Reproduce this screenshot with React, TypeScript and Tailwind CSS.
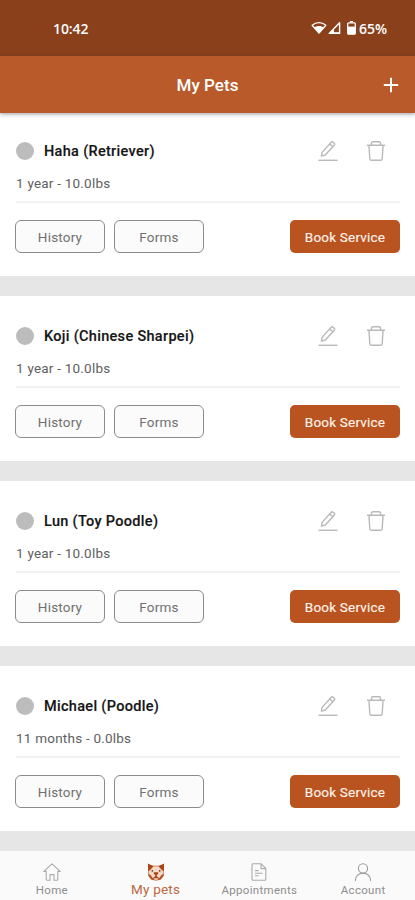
import React from "react";

type Pet = { name: string; info: string };

const pets: Pet[] = [
  { name: "Haha (Retriever)", info: "1 year - 10.0lbs" },
  { name: "Koji (Chinese Sharpei)", info: "1 year - 10.0lbs" },
  { name: "Lun (Toy Poodle)", info: "1 year - 10.0lbs" },
  { name: "Michael (Poodle)", info: "11 months - 0.0lbs" },
];

function StatusBar() {
  return (
    <div className="flex h-14 shrink-0 items-center bg-[#8a401b] pl-[53px] pr-[28px] text-white">
      <span className="font-['Open_Sans',sans-serif] text-[14px] font-semibold tracking-[-0.1px]">10:42</span>
      <div className="ml-auto flex items-center">
        <svg width="16" height="14" viewBox="0 0 16 14" fill="none">
          <path d="M1.2 4.2C5 .8 11 .8 14.8 4.2L8 12z" stroke="#fff" strokeWidth="1.4" strokeLinejoin="round" />
          <path d="M3.4 6.6c2.6-2 6.6-2 9.2 0L8 12.2z" fill="#fff" />
        </svg>
        <svg className="ml-px" width="13" height="14" viewBox="0 0 13 14" fill="none">
          <path d="M11.6 1.8v10.6H1.2z" stroke="#fff" strokeWidth="1.4" strokeLinejoin="round" />
          <path d="M1 12.8 6 7.6v3.6h6v1.6z" fill="#fff" />
        </svg>
        <svg className="ml-[6px]" width="9" height="14" viewBox="0 0 9 14" fill="none">
          <path d="M3 0h3v1.6H3z" fill="#fff" />
          <rect x=".7" y="1.8" width="7.6" height="11.4" rx="1" stroke="#fff" strokeWidth="1.3" />
          <path d="M1 5.6h7v7.6H1z" fill="#fff" />
        </svg>
        <span className="ml-[3px] font-['Open_Sans',sans-serif] text-[14px] font-semibold">65%</span>
      </div>
    </div>
  );
}

function Header() {
  return (
    <header className="z-10 grid h-[57px] shrink-0 grid-cols-[1fr_auto_1fr] items-center bg-[#b85a29] text-white shadow-[0_1px_4px_rgba(30,30,60,0.45)]">
      <span />
      <h1 className="text-[17px] font-medium leading-5 tracking-[0.05px]">My Pets</h1>
      <button className="mr-4 justify-self-end" aria-label="Add pet">
        <svg width="16" height="16" viewBox="0 0 16 16" stroke="#fff" strokeWidth="2">
          <path d="M8 .8v14.4M.8 8h14.4" />
        </svg>
      </button>
    </header>
  );
}

function EditIcon() {
  return (
    <svg width="20" height="22" viewBox="0 0 20 22" fill="none" stroke="#b9b9b9" strokeWidth="1.4" strokeLinejoin="round">
      <path d="M3.4 16.1 4.1 12.4 13.2 2.2Q14 1.4 14.9 2.1L16.3 3.3Q17.1 4.1 16.4 5L7.3 15zM11.7 4l3.1 2.8" />
      <path d="M.5 20.3h19" />
    </svg>
  );
}

function TrashIcon() {
  return (
    <svg width="20" height="22" viewBox="0 0 20 22" fill="none" stroke="#b9b9b9" strokeWidth="1.4" strokeLinejoin="round">
      <path d="M1 5.3h18M5.5 5V3.2Q5.5 1.8 6.9 1.8h6.2q1.4 0 1.4 1.4V5" />
      <path d="m3 5.5.8 13.2q.1 1.6 1.7 1.6h9q1.6 0 1.7-1.6L17 5.5" />
    </svg>
  );
}

function PetCard({ pet, first }: { pet: Pet; first: boolean }) {
  return (
    <article className={`flex shrink-0 flex-col bg-white pl-4 pr-[15px] ${first ? "h-[163px] pt-[27px]" : "h-[165px] pt-[29px]"}`}>
      <div className="flex h-[22px] items-center">
        <span className="size-[18px] rounded-full bg-[#bcbcbc]" />
        <h2 className="ml-[10px] pt-[2px] text-[14.5px] font-medium leading-[22px] tracking-[0.31px] text-[#161616] [-webkit-text-stroke:0.15px_#161616]">{pet.name}</h2>
        <div className="ml-auto mr-[14px] flex gap-7">
          <button aria-label="Edit"><EditIcon /></button>
          <button aria-label="Delete"><TrashIcon /></button>
        </div>
      </div>
      <p className="mt-[10px] h-[31px] border-b-2 border-[#f2f2f2] text-[13.5px] leading-[22px] tracking-[0.22px] text-[#606060]">{pet.info}</p>
      <div className="-ml-px mt-[17px] flex h-[33px] text-[13.5px] tracking-[0.2px]">
        <button className="w-[90px] rounded-[6px] border border-[#8b8b8b] bg-[#fbfbfb] pt-px text-[#707070]">History</button>
        <button className="ml-[9px] w-[90px] rounded-[6px] border border-[#8b8b8b] bg-[#fbfbfb] pt-px text-[#707070]">Forms</button>
        <button className="ml-auto w-[110px] rounded-[5px] bg-[#b9531f] pt-px text-[#fff4ec] [-webkit-text-stroke:0.15px_#fff4ec]">Book Service</button>
      </div>
    </article>
  );
}

function HomeIcon() {
  return (
    <svg width="18" height="18" viewBox="0 0 18 18" fill="none" stroke="#aaa" strokeWidth="1.1" strokeLinejoin="round">
      <path d="M3.2 8.4H.8L9 .8l8.2 7.6h-2.4v8.2q0 .6-.6.6H11v-5.6H7v5.6H3.8q-.6 0-.6-.6z" />
    </svg>
  );
}

function DogIcon() {
  return (
    <svg width="18" height="18" viewBox="0 0 18 18" fill="none">
      <path d="M1.6 3h14.8v9.5l-2.8 3.8q-4.6 2-9.2 0l-2.8-3.8z" fill="#f3d9ca" stroke="#c9784f" strokeWidth=".8" />
      <path d="M.9.6 6.6 3.2 3.6 6.6 1.2 8.4zM17.1.6l-5.7 2.6 3 3.4 2.4 1.8z" fill="#a94318" />
      <path d="M1.3 10.8 4 12.4l1.4 2.4 1.8.6v1.7q-2.2-.1-3.4-1.1l-2.5-3.4zM16.7 10.8 14 12.4l-1.4 2.4-1.8.6v1.7q2.2-.1 3.4-1.1l2.5-3.4z" fill="#b4501f" />
      <path d="M6.8 9.2h4.4v1.5l-1.4 1.3v1.5l2 .9-.8.9H7l-.8-.9 2-.9V12l-1.4-1.3z" fill="#a94318" />
      <circle cx="5.3" cy="7.8" r=".9" fill="#80310f" />
      <circle cx="12.7" cy="7.8" r=".9" fill="#80310f" />
    </svg>
  );
}

function DocumentIcon() {
  return (
    <svg width="18" height="18" viewBox="0 0 18 18" fill="none" stroke="#aaa" strokeWidth="1.1" strokeLinejoin="round">
      <path d="M3.6.8h7.6l4.6 4.6v10.8q0 1-1 1H3q-1 0-1-1V1.8q0-1 1-1zM11 .8v4.8h4.8M5 7.6h3.6M5 10.2h7.6M5 12.8h3.6" />
    </svg>
  );
}

function AccountIcon() {
  return (
    <svg width="18" height="18" viewBox="0 0 18 18" fill="none" stroke="#999" strokeWidth="1.1" strokeLinecap="round">
      <circle cx="9" cy="5.4" r="4.6" />
      <path d="M1.4 17.4C1.8 12.8 4.8 10.2 9 10.2s7.2 2.6 7.6 7.2" />
    </svg>
  );
}

function TabBar() {
  const label = "mt-[1px] text-[11.5px] leading-[16px] tracking-[0.3px] text-[#8e8e8e]";
  return (
    <nav className="z-10 grid h-[49px] shrink-0 grid-cols-4 bg-[#fafafa] pt-3">
      <div className="flex flex-col items-center"><HomeIcon /><span className={label}>Home</span></div>
      <div className="flex flex-col items-center">
        <DogIcon />
        <span className="-mt-px text-[13.5px] leading-[18px] tracking-[0.2px] text-[#bb683f]">My pets</span>
      </div>
      <div className="flex flex-col items-center"><DocumentIcon /><span className={label}>Appointments</span></div>
      <div className="flex flex-col items-center"><AccountIcon /><span className={label}>Account</span></div>
    </nav>
  );
}

export default function App() {
  return (
    <div className="flex h-[900px] w-[415px] flex-col overflow-hidden bg-[#e6e6e6] font-[Roboto,sans-serif]">
      <StatusBar />
      <Header />
      <main className="flex min-h-0 flex-1 flex-col gap-5 overflow-hidden">
        {pets.map((pet, i) => (
          <PetCard key={pet.name} pet={pet} first={i === 0} />
        ))}
      </main>
      <TabBar />
    </div>
  );
}
